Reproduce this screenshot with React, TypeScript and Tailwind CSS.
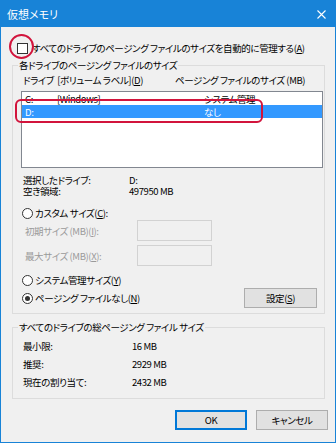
import React from "react";

const U = ({ c }: { c: string }) => <span className="underline">{c}</span>;

function Radio({ checked }: { checked?: boolean }) {
  return (
    <span className="w-[11px] h-[11px] rounded-full border border-[#333333] bg-white flex items-center justify-center shrink-0">
      {checked && <span className="w-[5px] h-[5px] rounded-full bg-[#333333]" />}
    </span>
  );
}

export default function App() {
  return (
    <div className="relative w-[336px] h-[443px] flex flex-col border border-[#1883d7] bg-[#f0f0f0] font-['Noto_Sans_CJK_JP',sans-serif] text-[9.5px] tracking-[-0.4px] leading-[12px] text-black whitespace-nowrap [font-feature-settings:'palt']">
      {/* title bar */}
      <div className="h-[26px] shrink-0 bg-[#1883d7] flex items-center justify-between pl-[6px] pr-[8px] text-white text-[11px] tracking-normal">
        <span>仮想メモリ</span>
        <svg width="9" height="9" viewBox="0 0 9 9" className="mr-[1px]">
          <path d="M0.5 0.5 L8.5 8.5 M8.5 0.5 L0.5 8.5" stroke="white" strokeWidth="1.1" />
        </svg>
      </div>

      <div className="flex flex-col pl-[11px] pr-[10px]">
        {/* auto manage checkbox */}
        <div className="mt-[14px] h-[14px] flex items-center">
          <span className="ml-[5px] w-[11px] h-[11px] border border-[#333333] bg-white shrink-0" />
          <span className="ml-[4px]">
            すべてのドライブのページング ファイルのサイズを自動的に管理する(<U c="A" />)
          </span>
        </div>

        {/* group 1 */}
        <fieldset className="mt-[4px] border border-[#dcdcdc] pb-[5px]">
          <legend className="ml-[5px] px-[1px] leading-[12px]">各ドライブのページング ファイルのサイズ</legend>
          <div className="flex flex-col pl-[8px] pr-[1px]">
            <div className="mt-[3px] h-[12px] flex ml-[2px]">
              <span className="w-[152px]">ドライブ&nbsp;&nbsp;[ボリューム ラベル](<U c="D" />)</span>
              <span>ページング ファイルのサイズ (MB)</span>
            </div>
            <div className="mt-[5px] h-[77px] border border-[#828790] bg-white flex flex-col">
              <div className="h-[13px] flex items-center pl-[3px]">
                <span className="w-[32px]">C:</span>
                <span className="w-[147px]">[Windows]</span>
                <span>システム管理</span>
              </div>
              <div className="h-[13px] flex items-center pl-[3px] bg-[#3399ff] text-white">
                <span className="w-[32px]">D:</span>
                <span className="w-[147px]"></span>
                <span>なし</span>
              </div>
            </div>

            <div className="mt-[7px] ml-[2px] flex flex-col leading-[11px]">
              <div className="h-[11px] flex items-center">
                <span className="w-[106px]">選択したドライブ:</span>
                <span>D:</span>
              </div>
              <div className="h-[11px] flex items-center">
                <span className="w-[106px]">空き領域:</span>
                <span>497950 MB</span>
              </div>
            </div>

            <div className="mt-[10px] h-[12px] flex items-center ml-[1px]">
              <Radio />
              <span className="ml-[2px]">
                カスタム サイズ(<U c="C" />):
              </span>
            </div>
            <div className="mt-[1px] h-[21px] flex items-center ml-[4px] text-[#9a9a9a]">
              <span className="w-[112px]">
                初期サイズ (MB)(<U c="I" />):
              </span>
              <span className="w-[75px] h-[21px] border border-[#d2d2d2]" />
            </div>
            <div className="mt-[4px] h-[21px] flex items-center ml-[4px] text-[#9a9a9a]">
              <span className="w-[112px]">
                最大サイズ (MB)(<U c="X" />):
              </span>
              <span className="w-[75px] h-[21px] border border-[#d2d2d2]" />
            </div>
            <div className="mt-[8px] h-[12px] flex items-center ml-[1px]">
              <Radio />
              <span className="ml-[2px]">
                システム管理サイズ(<U c="Y" />)
              </span>
            </div>
            <div className="mt-[2px] h-[20px] flex items-center ml-[1px]">
              <Radio checked />
              <span className="ml-[2px]">
                ページング ファイルなし(<U c="N" />)
              </span>
              <button className="ml-auto mr-[6px] w-[73px] h-[20px] bg-[#e1e1e1] border border-[#adadad] flex items-center justify-center">
                設定(<U c="S" />)
              </button>
            </div>
          </div>
        </fieldset>

        {/* group 2 */}
        <fieldset className="mt-[7px] border border-[#dcdcdc] pb-[7px]">
          <legend className="ml-[5px] px-[1px] leading-[12px]">すべてのドライブの総ページング ファイル サイズ</legend>
          <div className="mt-[4px] flex flex-col pl-[10px]">
            <div className="h-[18px] flex items-center">
              <span className="w-[109px]">最小限:</span>
              <span>16 MB</span>
            </div>
            <div className="h-[18px] flex items-center">
              <span className="w-[109px]">推奨:</span>
              <span>2929 MB</span>
            </div>
            <div className="h-[18px] flex items-center">
              <span className="w-[109px]">現在の割り当て:</span>
              <span>2432 MB</span>
            </div>
          </div>
        </fieldset>
      </div>

      {/* buttons */}
      <div className="mt-[11px] flex justify-end gap-[9px] pr-[7px]">
        <button className="w-[72px] h-[20px] bg-[#e1e1e1] border-2 border-[#0078d7] flex items-center justify-center">
          OK
        </button>
        <button className="w-[72px] h-[20px] bg-[#e1e1e1] border border-[#adadad] flex items-center justify-center">
          キャンセル
        </button>
      </div>

      {/* red annotations */}
      <div className="absolute left-[8px] top-[33px] w-[25px] h-[25px] rounded-full border-2 border-[#d2143c]" />
      <div className="absolute left-[14px] top-[98px] w-[248px] h-[24px] rounded-[6px] border-2 border-[#d2143c]" />
    </div>
  );
}
